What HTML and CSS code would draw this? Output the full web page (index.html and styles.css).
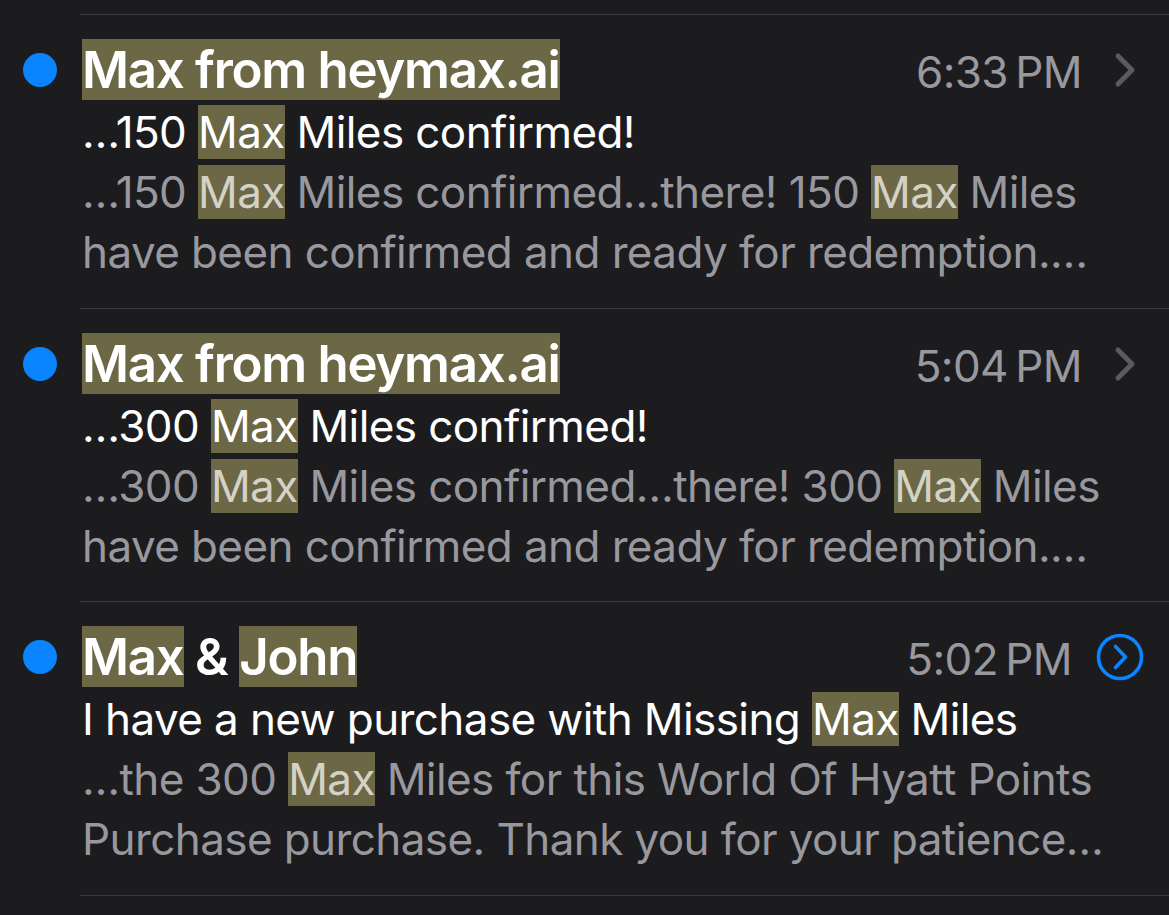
FILE: index.html
```html
<!DOCTYPE html>
<html lang="en">
<head>
<meta charset="utf-8">
<title>Mail search</title>
<link rel="stylesheet" href="styles.css">
</head>
<body>
<ul class="list">
  <li class="row">
    <div class="dot-col"><span class="dot"></span></div>
    <div class="main">
      <div class="head">
        <span class="sender"><mark class="hl">Max from heymax.ai</mark></span>
        <span class="time">6:33&#8239;PM</span>
        <span class="chev"><svg viewBox="0 0 22 36" width="22" height="36"><path d="M4 4 L18 18 L4 32" fill="none" stroke="#5b5b5f" stroke-width="5" stroke-linecap="round" stroke-linejoin="round"/></svg></span>
      </div>
      <div class="subject">…150 <mark class="hl">Max</mark> Miles confirmed!</div>
      <div class="preview">
        <span class="pline">…150 <mark class="hl">Max</mark> Miles confirmed…there! 150 <mark class="hl">Max</mark> Miles</span>
        <span class="pline">have been confirmed and ready for redemption.…</span>
      </div>
    </div>
  </li>
  <li class="row">
    <div class="dot-col"><span class="dot"></span></div>
    <div class="main">
      <div class="head">
        <span class="sender"><mark class="hl">Max from heymax.ai</mark></span>
        <span class="time">5:04&#8239;PM</span>
        <span class="chev"><svg viewBox="0 0 22 36" width="22" height="36"><path d="M4 4 L18 18 L4 32" fill="none" stroke="#5b5b5f" stroke-width="5" stroke-linecap="round" stroke-linejoin="round"/></svg></span>
      </div>
      <div class="subject">…300 <mark class="hl">Max</mark> Miles confirmed!</div>
      <div class="preview">
        <span class="pline">…300 <mark class="hl">Max</mark> Miles confirmed…there! 300 <mark class="hl">Max</mark> Miles</span>
        <span class="pline">have been confirmed and ready for redemption.…</span>
      </div>
    </div>
  </li>
  <li class="row">
    <div class="dot-col"><span class="dot"></span></div>
    <div class="main">
      <div class="head">
        <span class="sender"><mark class="hl">Max</mark> &amp; <mark class="hl">John</mark></span>
        <span class="time">5:02&#8239;PM</span>
        <span class="circ"><svg viewBox="0 0 48 48" width="48" height="48"><circle cx="24" cy="24" r="21.5" fill="none" stroke="#0a84ff" stroke-width="3.6"/><path d="M19.5 13.5 L29.5 24 L19.5 34.5" fill="none" stroke="#0a84ff" stroke-width="3.6" stroke-linecap="round" stroke-linejoin="round"/></svg></span>
      </div>
      <div class="subject">I have a new purchase with Missing <mark class="hl">Max</mark> Miles</div>
      <div class="preview">
        <span class="pline">…the 300 <mark class="hl">Max</mark> Miles for this World Of Hyatt Points</span>
        <span class="pline">Purchase purchase. Thank you for your patience…</span>
      </div>
    </div>
  </li>
</ul>
</body>
</html>
```

FILE: styles.css
```css
html, body {
  margin: 0;
  padding: 0;
  background: #1c1c1e;
}

body {
  font-family: Inter, "Noto Sans", "Liberation Sans", sans-serif;
  color: #ffffff;
  letter-spacing: -0.037em;
  overflow: hidden;
}

.list {
  list-style: none;
  margin: 0;
  padding: 14px 0 0 0;
}

.row {
  display: flex;
}

.dot-col {
  width: 80px;
  flex: none;
}

.dot {
  display: block;
  width: 34px;
  height: 34px;
  border-radius: 50%;
  background: #0a84ff;
  margin: 39px 0 0 23px;
}

.main {
  flex: 1;
  min-width: 0;
  border-top: 1.5px solid #3a3a3c;
  padding: 25px 0 25.5px 2px;
}

.row:last-child .main {
  border-bottom: 1.5px solid #3a3a3c;
}

.head {
  display: flex;
  align-items: baseline;
  height: 60px;
  line-height: 60px;
}

.sender {
  flex: 1;
  font-size: 51px;
  font-weight: 600;
  letter-spacing: -0.025em;
  white-space: nowrap;
}

.hl {
  background: #6c6846;
  color: inherit;
}

.time {
  font-size: 44px;
  color: #98989e;
  white-space: nowrap;
}

.chev {
  align-self: center;
  width: 22px;
  height: 36px;
  margin: 0 33px 0 32px;
  display: flex;
}

.circ {
  align-self: center;
  width: 48px;
  height: 48px;
  margin: 0 25px 0 24px;
  display: flex;
}

.subject {
  font-size: 44px;
  line-height: 60px;
  white-space: nowrap;
  padding-top: 2px;
}

.preview {
  font-size: 44px;
  line-height: 60px;
  color: #98989e;
}

.preview .hl {
  color: #d4d2c6;
}

.pline {
  display: block;
  white-space: nowrap;
}
```
